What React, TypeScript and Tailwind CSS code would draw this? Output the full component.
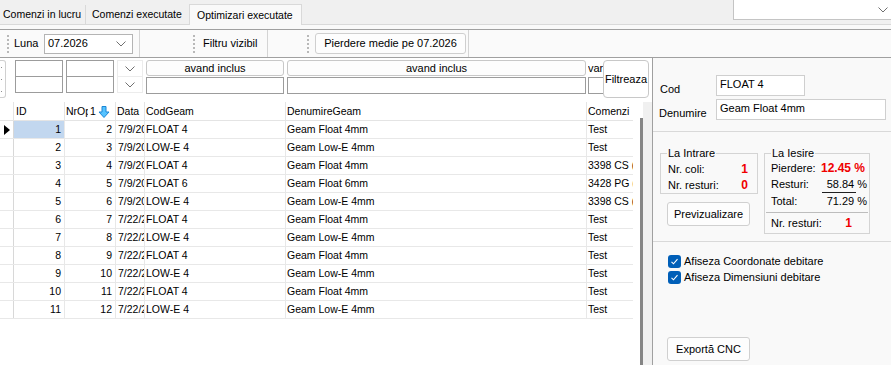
import React from 'react';

interface GridRow {
  id: number;
  nrOp: number;
  data: string;
  cod: string;
  den: string;
  com: string;
}

const rows: GridRow[] = [
  { id: 1, nrOp: 2, data: '7/9/2026', cod: 'FLOAT 4', den: 'Geam Float 4mm', com: 'Test' },
  { id: 2, nrOp: 3, data: '7/9/2026', cod: 'LOW-E 4', den: 'Geam Low-E 4mm', com: 'Test' },
  { id: 3, nrOp: 4, data: '7/9/2026', cod: 'FLOAT 4', den: 'Geam Float 4mm', com: '3398 CS (12)' },
  { id: 4, nrOp: 5, data: '7/9/2026', cod: 'FLOAT 6', den: 'Geam Float 6mm', com: '3428 PG (2)' },
  { id: 5, nrOp: 6, data: '7/9/2026', cod: 'LOW-E 4', den: 'Geam Low-E 4mm', com: '3398 CS (12)' },
  { id: 6, nrOp: 7, data: '7/22/2026', cod: 'FLOAT 4', den: 'Geam Float 4mm', com: 'Test' },
  { id: 7, nrOp: 8, data: '7/22/2026', cod: 'LOW-E 4', den: 'Geam Low-E 4mm', com: 'Test' },
  { id: 8, nrOp: 9, data: '7/22/2026', cod: 'FLOAT 4', den: 'Geam Float 4mm', com: 'Test' },
  { id: 9, nrOp: 10, data: '7/22/2026', cod: 'LOW-E 4', den: 'Geam Low-E 4mm', com: 'Test' },
  { id: 10, nrOp: 11, data: '7/22/2026', cod: 'FLOAT 4', den: 'Geam Float 4mm', com: 'Test' },
  { id: 11, nrOp: 12, data: '7/22/2026', cod: 'LOW-E 4', den: 'Geam Low-E 4mm', com: 'Test' },
];

function Chevron() {
  return (
    <svg width="10" height="6" viewBox="0 0 10 6" fill="none">
      <polyline points="0.5,0.5 5,5 9.5,0.5" stroke="#707070" strokeWidth="1" />
    </svg>
  );
}

function Grip() {
  return <div className="h-[18px] border-l-2 border-dotted border-[#b8b8b8]" />;
}

function TabStrip() {
  return (
    <div className="flex items-end h-[25px] border-b border-[#d9d9d9] text-[10.5px]">
      <div className="w-[86px] h-[19px] pl-[3px] flex items-center border-r border-[#d9d9d9] whitespace-nowrap">Comenzi in lucru</div>
      <div className="w-[103px] h-[19px] pl-[6px] flex items-center whitespace-nowrap">Comenzi executate</div>
      <div className="w-[113px] h-[21px] -mb-px pl-[7px] flex items-center bg-[#f9f9f9] border border-b-0 border-[#d9d9d9] whitespace-nowrap">
        Optimizari executate
      </div>
      <div className="ml-auto self-start w-[158px] h-[20px] bg-white border-l border-b border-[#c4c4c4] flex items-center justify-end pr-[3px]">
        <Chevron />
      </div>
    </div>
  );
}

function Toolbar() {
  return (
    <div className="h-[29px] flex border-y border-[#a0a0a0] bg-[#fafafa]">
      <div className="w-[140px] flex items-center pl-[7px] border-r border-[#d4d4d4]">
        <Grip />
        <span className="w-[35px] pl-[5px]">Luna</span>
        <div className="w-[89px] h-[20px] bg-white border border-[#b4b4b4] flex items-center justify-between pl-[3px] pr-[6px]">
          <span>07.2026</span>
          <Chevron />
        </div>
      </div>
      <div className="w-[128px] flex items-center pl-[53px] border-r border-[#d4d4d4]">
        <Grip />
        <span className="ml-[8px]">Filtru vizibil</span>
      </div>
      <div className="w-[201px] flex items-center pl-[39px] border-r border-[#d4d4d4]">
        <Grip />
        <button className="ml-[6px] w-[151px] h-[21px] rounded-[3px] border border-[#cfcfcf] bg-[#fdfdfd] flex items-center justify-center">
          Pierdere medie pe 07.2026
        </button>
      </div>
    </div>
  );
}

function FilterPair({ w }: { w: string }) {
  return (
    <div className={`${w} flex flex-col`}>
      <div className="h-[17px] bg-white border border-[#9c9c9c]" />
      <div className="h-[17px] -mt-px bg-white border border-[#9c9c9c]" />
    </div>
  );
}

function InclusPair({ w }: { w: string }) {
  return (
    <div className={`${w} flex flex-col`}>
      <div className="h-[16px] rounded-[3px] border border-[#c8c8c8] bg-[#fdfdfd] flex items-center justify-center">avand inclus</div>
      <div className="h-[17px] mt-px bg-white border border-[#9c9c9c]" />
    </div>
  );
}

function FilterArea() {
  return (
    <div className="h-[44px] flex items-start pt-[2px]">
      <div className="w-[6px] h-[38px] rounded-r-[3px] border border-l-0 border-[#d0d0d0] flex flex-col justify-around pl-[1px]">
        <div className="w-px h-px bg-[#909090]" />
        <div className="w-px h-px bg-[#909090]" />
        <div className="w-px h-px bg-[#909090]" />
      </div>
      <div className="ml-[9px]">
        <FilterPair w="w-[48px]" />
      </div>
      <div className="ml-[3px]">
        <FilterPair w="w-[48px]" />
      </div>
      <div className="ml-[3px] w-[26px] flex flex-col">
        <div className="h-[17px] border border-[#ececec] flex items-center justify-center">
          <Chevron />
        </div>
        <div className="h-[17px] -mt-px border border-[#ececec] flex items-center justify-center">
          <Chevron />
        </div>
      </div>
      <div className="ml-[3px]">
        <InclusPair w="w-[138px]" />
      </div>
      <div className="ml-[3px]">
        <InclusPair w="w-[299px]" />
      </div>
      <div className="ml-[2px] w-[15px] flex flex-col overflow-hidden">
        <div className="h-[16px] flex items-center whitespace-nowrap">var</div>
        <div className="h-[17px] mt-px bg-white border border-[#9c9c9c] border-r-0" />
      </div>
      <button className="w-[46px] h-[38px] rounded-[4px] border border-[#c8c8c8] bg-white flex items-center justify-center">
        Filtreaza
      </button>
    </div>
  );
}

function SortArrow() {
  return (
    <svg width="12" height="12" viewBox="0 0 12 12">
      <path d="M4 0.5 H8 V6 H11 L6 11.5 L1 6 H4 Z" fill="#56c3ff" stroke="#1a86d6" strokeWidth="1" strokeLinejoin="round" />
    </svg>
  );
}

function Grid() {
  return (
    <div className="w-[633px] text-[10.5px]">
      <div className="flex h-[19px] border-b border-[#e4e4e4] items-center">
        <div className="w-[14px] h-full border-r border-[#e4e4e4]" />
        <div className="w-[51px] h-full border-r border-[#e4e4e4] pl-[2px] flex items-center">ID</div>
        <div className="w-[51px] h-full border-r border-[#e4e4e4] pl-[1px] flex items-center">
          <span className="w-[22px] overflow-hidden whitespace-nowrap">NrOpt</span>
          <span className="ml-[2px]">1</span>
          <span className="ml-[2px] mt-[2px]">
            <SortArrow />
          </span>
        </div>
        <div className="w-[29px] h-full border-r border-[#e4e4e4] pl-[1px] flex items-center">Data</div>
        <div className="w-[141px] h-full border-r border-[#e4e4e4] pl-[1px] flex items-center">CodGeam</div>
        <div className="w-[301px] h-full border-r border-[#e4e4e4] pl-[1px] flex items-center">DenumireGeam</div>
        <div className="w-[46px] h-full pl-[1px] flex items-center overflow-hidden whitespace-nowrap">Comenzi</div>
      </div>
      {rows.map((r, i) => (
        <div key={r.id} className="flex h-[18px] border-b border-[#e8e8e8]">
          <div className="w-[14px] border-r border-[#d8d8d8] flex items-center pl-[4px]">
            {i === 0 && (
              <svg width="6" height="10" viewBox="0 0 6 10">
                <path d="M0 0 L6 5 L0 10 Z" fill="#000" />
              </svg>
            )}
          </div>
          <div className={`w-[51px] border-r border-[#e8e8e8] flex items-center justify-end pr-[3px] ${i === 0 ? 'bg-[#c2d7ef]' : ''}`}>
            {r.id}
          </div>
          <div className="w-[51px] border-r border-[#e8e8e8] flex items-center justify-end pr-[3px]">{r.nrOp}</div>
          <div className="w-[29px] border-r border-[#e8e8e8] flex items-center pl-[2px] overflow-hidden whitespace-nowrap">{r.data}</div>
          <div className="w-[141px] border-r border-[#e8e8e8] flex items-center pl-[1px]">{r.cod}</div>
          <div className="w-[301px] border-r border-[#e8e8e8] flex items-center pl-[1px]">{r.den}</div>
          <div className="w-[46px] flex items-center pl-[1px] overflow-hidden whitespace-nowrap">{r.com}</div>
        </div>
      ))}
    </div>
  );
}

function LeftPanel() {
  return (
    <div className="w-[652px] bg-white flex flex-col">
      <FilterArea />
      <div className="flex flex-1">
        <Grid />
        <div className="w-[7px]" />
        <div className="w-[3px] mt-[16px] bg-[#858585]" />
        <div className="w-[9px] bg-[#f0f0f0]" />
      </div>
    </div>
  );
}

function Checkbox({ label }: { label: string }) {
  return (
    <div className="h-[16px] flex items-center">
      <div className="w-[13px] h-[13px] rounded-[3px] bg-[#005fb8] flex items-center justify-center">
        <svg width="9" height="9" viewBox="0 0 9 9" fill="none">
          <polyline points="1.5,4.8 3.5,6.8 7.5,2.2" stroke="#fff" strokeWidth="1.1" />
        </svg>
      </div>
      <span className="ml-[3px]">{label}</span>
    </div>
  );
}

function RightPanel() {
  return (
    <div className="flex-1 border-l border-[#a0a0a0] bg-[#f9f9f9] flex flex-col">
      <div className="h-[74px] border-b border-[#d9d9d9] pt-[17px]">
        <div className="flex items-end">
          <span className="w-[63px] pl-[7px]">Cod</span>
          <div className="w-[89px] h-[21px] bg-white border border-[#cfcfcf] pl-[3px] pt-[2px]">FLOAT 4</div>
        </div>
        <div className="flex items-end mt-[3px]">
          <span className="w-[63px] pl-[6px]">Denumire</span>
          <div className="w-[170px] h-[21px] bg-white border border-[#cfcfcf] pl-[3px] pt-[2px]">Geam Float 4mm</div>
        </div>
      </div>

      <div className="h-[110px] border-b border-[#d9d9d9] pt-[15px] pl-[7px] flex items-start">
        <div className="flex flex-col">
          <fieldset className="w-[98px] border border-[#d4d4d4] pb-0">
            <legend className="ml-[6px] px-[1px] leading-[13px]">La Intrare</legend>
            <div className="pl-[7px] pr-[9px] pt-[1px]">
              <div className="h-[16px] flex items-center justify-between">
                <span>Nr. coli:</span>
                <span className="font-bold text-[#f00000] text-[12px]">1</span>
              </div>
              <div className="h-[16px] flex items-center justify-between">
                <span>Nr. resturi:</span>
                <span className="font-bold text-[#f00000] text-[12px]">0</span>
              </div>
            </div>
          </fieldset>
          <button className="ml-[7px] mt-[8px] w-[83px] h-[24px] rounded-[3px] border border-[#d0d0d0] bg-[#fdfdfd] flex items-center justify-center">
            Previzualizare
          </button>
        </div>
        <fieldset className="ml-[6px] w-[106px] border border-[#d4d4d4]">
          <legend className="ml-[6px] px-[1px] leading-[13px]">La Iesire</legend>
          <div className="pl-[6px] pr-[2px]">
            <div className="h-[16px] flex items-center justify-between">
              <span>Pierdere:</span>
              <span className="font-bold text-[#f00000] text-[12px] mr-[2px]">12.45 %</span>
            </div>
            <div className="h-[17px] flex items-center justify-between">
              <span>Resturi:</span>
              <span className="flex h-full items-center">
                <span className="w-[34px] h-full flex items-center justify-end border-b border-[#202020] pr-[2px]">58.84</span>
                <span className="ml-[1px]">%</span>
              </span>
            </div>
            <div className="h-[16px] flex items-center justify-between">
              <span>Total:</span>
              <span>71.29 %</span>
            </div>
          </div>
          <div className="mt-[3px] mx-px h-px bg-[#bdbdbd]" />
          <div className="h-[20px] pl-[6px] pr-[17px] flex items-center justify-between">
            <span>Nr. resturi:</span>
            <span className="font-bold text-[#f00000] text-[12px]">1</span>
          </div>
        </fieldset>
      </div>

      <div className="flex-1 pt-[11px] pl-[15px]">
        <Checkbox label="Afiseza Coordonate debitare" />
        <Checkbox label="Afiseza Dimensiuni debitare" />
        <button className="-ml-px mt-[52px] w-[83px] h-[24px] rounded-[3px] border border-[#d0d0d0] bg-[#fdfdfd] flex items-center justify-center">
          Exportă CNC
        </button>
      </div>
    </div>
  );
}

export default function App() {
  return (
    <div className="w-[891px] h-[365px] overflow-hidden bg-[#f0f0f0] text-[11px] leading-[13px] text-black font-['Liberation_Sans',Arial,sans-serif] flex flex-col">
      <TabStrip />
      <div className="h-[4px] bg-[#f9f9f9]" />
      <Toolbar />
      <div className="flex flex-1 min-h-0">
        <LeftPanel />
        <RightPanel />
      </div>
    </div>
  );
}
